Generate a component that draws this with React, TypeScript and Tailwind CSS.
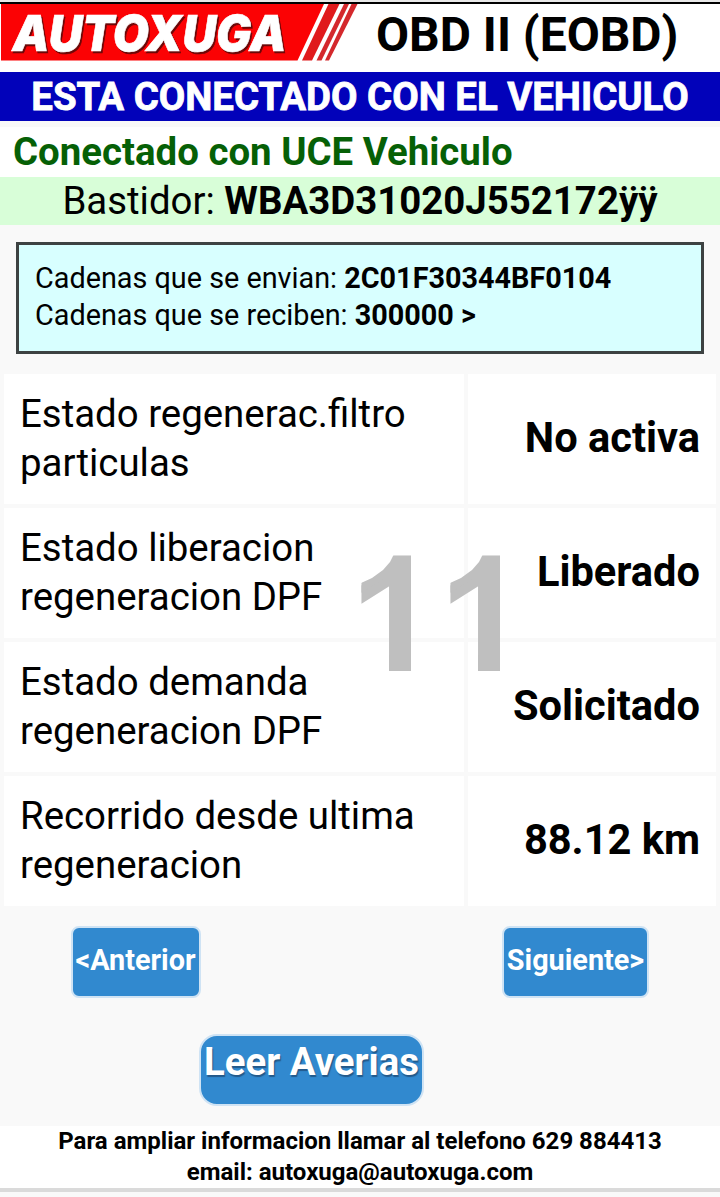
const readings = [
  { label: ["Estado regenerac.filtro", "particulas"], value: "No activa" },
  { label: ["Estado liberacion", "regeneracion DPF"], value: "Liberado" },
  { label: ["Estado demanda", "regeneracion DPF"], value: "Solicitado" },
  { label: ["Recorrido desde ultima", "regeneracion"], value: "88.12 km" },
];

function Logo() {
  return (
    <svg className="block h-[57px] w-[360px] shrink-0 overflow-visible" viewBox="0 4 360 57" role="img" aria-label="AUTOXUGA">
      <path d="M1 4H324L297.5 60.5H1Z" fill="#fb0204" />
      <path d="M328.5 4H339.5L312 60.5H302Z" fill="#e01a1c" />
      <path d="M344 4H349L321.500 60.5H316.5Z" fill="#d4282c" />
      <path d="M351.500 4H357.500L329 60.5H325Z" fill="#d4282c" />
      <g
        fontFamily="Inter, Liberation Sans, sans-serif"
        fontSize="50"
        fontWeight="900"
        fontStyle="italic"
        strokeWidth="0.6"
      >
        <text x="14" y="52.5" textLength="274" lengthAdjust="spacingAndGlyphs" fill="#6b0808" stroke="#6b0808">AUTOXUGA</text>
        <text x="12.5" y="51" textLength="274" lengthAdjust="spacingAndGlyphs" fill="#fff" stroke="#fff">AUTOXUGA</text>
      </g>
    </svg>
  );
}

export default function App() {
  return (
    <div className="relative h-[1197px] w-[720px] overflow-hidden bg-[#f9f9f9] text-black [font-family:Roboto,sans-serif]">
      <header className="flex h-[72px] items-start border-t-2 border-[#e8e8e8] bg-white">
        <div className="flex h-[70px] w-full items-start border-t-2 border-black">
          <Logo />
          <h1 className="ml-[16px] mt-[3px] whitespace-nowrap text-[48px] font-bold leading-[56px]">OBD II (EOBD)</h1>
        </div>
      </header>

      <div className="h-[49px] whitespace-nowrap bg-[#0202ba] text-center text-[38.4px] font-bold leading-[49px] text-white [-webkit-text-stroke:0.8px_white]">
        ESTA CONECTADO CON EL VEHICULO
      </div>
      <div className="mt-[6px] h-[50px] whitespace-nowrap bg-white pl-[13px] text-[38.4px] font-bold leading-[50px] text-[#066006]">
        Conectado con UCE Vehiculo
      </div>
      <div className="h-[48px] whitespace-nowrap bg-[#d8fed8] text-center text-[38.4px] leading-[48px]">
        Bastidor: <b>WBA3D31020J552172ÿÿ</b>
      </div>

      <section className="mx-[16px] mt-[17px] h-[112px] whitespace-nowrap border-[3px] border-[#3d4242] bg-[#d8ffff] px-[16px] pt-[15px] text-[28.8px] leading-[37px]">
        <p>Cadenas que se envian: <b>2C01F30344BF0104</b></p>
        <p>Cadenas que se reciben: <b>300000 &gt;</b></p>
      </section>

      <div className="mt-[20px] flex flex-col gap-[4px] px-[4px]">
        {readings.map((r) => (
          <div key={r.value} className="grid h-[130px] grid-cols-[460px_248px] gap-[4px]">
            <div className="flex flex-col justify-center bg-white pb-[2px] pl-[16px] text-[38.4px] leading-[49px]">
              {r.label.map((line) => (
                <span key={line} className="whitespace-nowrap">{line}</span>
              ))}
            </div>
            <div className="flex items-center justify-end bg-white pb-[3px] pr-[16px] text-[41.6px] font-bold leading-[49px]">{r.value}</div>
          </div>
        ))}
      </div>

      <div className="mt-[20px] flex h-[72px] justify-between pl-[70.5px] pr-[71px] text-[28.8px] font-bold leading-[64px] text-white [text-shadow:1px_2px_1px_#23598a]">
        <button className="flex w-[130px] justify-center whitespace-nowrap rounded-[8px] border-2 border-[#cfe3f4] bg-[#3189cf]">&lt;Anterior</button>
        <button className="flex w-[147px] justify-center whitespace-nowrap rounded-[8px] border-2 border-[#cfe3f4] bg-[#3189cf]">Siguiente&gt;</button>
      </div>
      <button className="ml-[199px] mt-[36px] flex h-[72px] w-[225px] items-start justify-center whitespace-nowrap rounded-[18px] border-2 border-[#cfe3f4] bg-[#3189cf] text-[38.4px] font-bold leading-[52px] text-white [text-shadow:1px_2px_1px_#23598a]">
        Leer Averias
      </button>

      <footer className="mt-[20px] h-[66px] whitespace-nowrap border-b-4 border-[#dadada] bg-white text-center text-[24px] font-bold leading-[31px]">
        <p>Para ampliar informacion llamar al telefono 629 884413</p>
        <p>email: autoxuga@autoxuga.com</p>
      </footer>

      <div className="pointer-events-none absolute left-[350px] top-[522px] flex whitespace-nowrap text-[168px] font-bold leading-[184px] text-[#bfbfbf] [font-family:'Liberation_Sans',Arial,sans-serif] [text-shadow:0_11px_0_#bfbfbf]">
        <span className="w-[89px] [clip-path:polygon(44px_0,61px_0,61px_149px,39px_149px,39px_120px,0_120px,0_64px,11px_61px,22px_56px,33px_48px,40px_40px,44px_32px)]">1</span>
        <span className="w-[89px] [clip-path:polygon(44px_0,61px_0,61px_149px,39px_149px,39px_120px,0_120px,0_64px,11px_61px,22px_56px,33px_48px,40px_40px,44px_32px)]">1</span>
      </div>
    </div>
  );
}
